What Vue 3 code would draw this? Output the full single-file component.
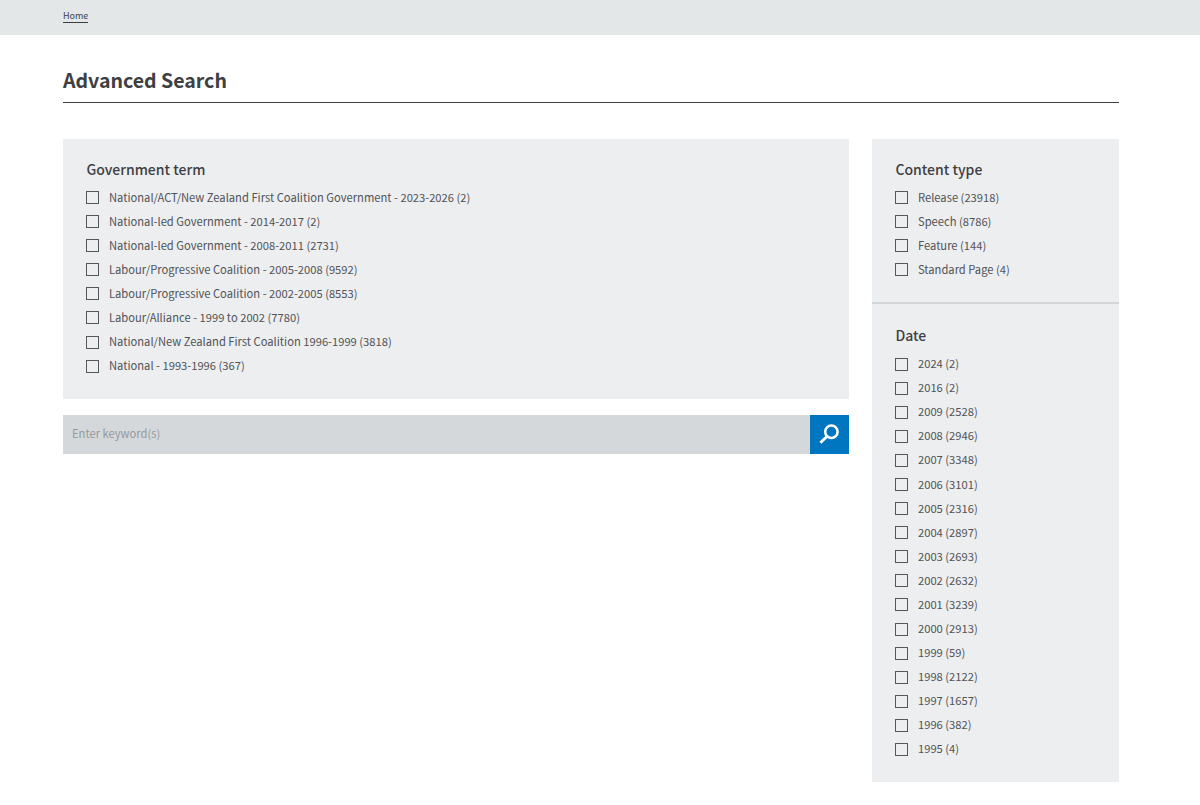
<script setup>
import { ref } from "vue"

const keyword = ref("")

const terms = ref([
  { label: "National/ACT/New Zealand First Coalition Government - 2023-2026", count: 2 },
  { label: "National-led Government - 2014-2017", count: 2 },
  { label: "National-led Government - 2008-2011", count: 2731 },
  { label: "Labour/Progressive Coalition - 2005-2008", count: 9592 },
  { label: "Labour/Progressive Coalition - 2002-2005", count: 8553 },
  { label: "Labour/Alliance - 1999 to 2002", count: 7780 },
  { label: "National/New Zealand First Coalition 1996-1999", count: 3818 },
  { label: "National - 1993-1996", count: 367 }
])

const sideFilters = ref([
  {
    title: "Content type",
    options: [
      { label: "Release", count: 23918 },
      { label: "Speech", count: 8786 },
      { label: "Feature", count: 144 },
      { label: "Standard Page", count: 4 }
    ]
  },
  {
    title: "Date",
    options: [
      { label: "2024", count: 2 },
      { label: "2016", count: 2 },
      { label: "2009", count: 2528 },
      { label: "2008", count: 2946 },
      { label: "2007", count: 3348 },
      { label: "2006", count: 3101 },
      { label: "2005", count: 2316 },
      { label: "2004", count: 2897 },
      { label: "2003", count: 2693 },
      { label: "2002", count: 2632 },
      { label: "2001", count: 3239 },
      { label: "2000", count: 2913 },
      { label: "1999", count: 59 },
      { label: "1998", count: 2122 },
      { label: "1997", count: 1657 },
      { label: "1996", count: 382 },
      { label: "1995", count: 4 }
    ]
  }
])
</script>

<template>
  <div class="page">
    <nav class="breadcrumb">
      <a href="#">Home</a>
    </nav>

    <main class="container">
      <h1>Advanced Search</h1>

      <div class="search-layout">
        <div class="search-main">
          <section class="panel">
            <h2>Government term</h2>
            <label v-for="term in terms" :key="term.label" class="option">
              <input type="checkbox" />
              <span>{{ term.label }} ({{ term.count }})</span>
            </label>
          </section>

          <form class="search-box" @submit.prevent>
            <input v-model="keyword" type="text" placeholder="Enter keyword(s)" />
            <button type="submit" aria-label="Search">
              <svg width="20" height="20" viewBox="0 0 20 20" fill="none" stroke="#fff">
                <circle cx="12.4" cy="7.8" r="6.2" stroke-width="2.5" />
                <path d="M8.2 12.2 L1.4 18.8" stroke-width="2.9" />
              </svg>
            </button>
          </form>
        </div>

        <aside class="sidebar">
          <section v-for="filter in sideFilters" :key="filter.title" class="panel">
            <h2>{{ filter.title }}</h2>
            <label v-for="option in filter.options" :key="option.label" class="option">
              <input type="checkbox" />
              <span>{{ option.label }} ({{ option.count }})</span>
            </label>
          </section>
        </aside>
      </div>
    </main>
  </div>
</template>

<style>
body {
  margin: 0;
  background: #fff;
}
</style>

<style scoped>
.page {
  height: 805px;
  overflow: hidden;
  font-family: "Noto Sans CJK SC", "Noto Sans", sans-serif;
  color: #3d4042;
}

.breadcrumb {
  box-sizing: border-box;
  height: 35px;
  padding: 9px 63px 0;
  background: #e3e7e8;
  font-size: 9px;
  line-height: 13px;
}

.breadcrumb a {
  display: inline-block;
  color: #3d4042;
  text-decoration: none;
  border-bottom: 1px solid #3d4042;
}

.container {
  width: 1056px;
  margin-left: 63px;
}

h1 {
  box-sizing: border-box;
  height: 68px;
  margin: 0 0 36px;
  padding-top: 30px;
  border-bottom: 1px solid #3d4042;
  font-size: 19.55px;
  line-height: 30px;
  font-weight: 700;
}

.search-layout {
  display: grid;
  grid-template-columns: 785.5px 247px;
  justify-content: space-between;
  align-items: start;
}

.panel {
  box-sizing: border-box;
  padding: 19px 23.4px 21.3px;
  background: #edeef0;
}

.sidebar .panel {
  padding-bottom: 20.8px;
}

.sidebar .panel + .panel {
  padding-top: 19.5px;
  border-top: 2px solid #d3d6d8;
}

.sidebar .panel + .panel h2 {
  margin-bottom: 5px;
}

h2 {
  margin: 0 0 4px;
  font-size: 14px;
  line-height: 23px;
  font-weight: 500;
}

.option {
  display: flex;
  align-items: center;
  gap: 9.6px;
  height: 24.08px;
  font-size: 11.2px;
  color: #505356;
}

.option input {
  appearance: none;
  width: 13px;
  height: 13px;
  margin: 1px 0 0;
  border: 1px solid #55585a;
}

.option span {
  margin-top: -1px;
}

.search-box {
  display: flex;
  height: 39px;
  margin-top: 16px;
}

.search-box input {
  flex: 1;
  min-width: 0;
  padding: 0 9px 2px;
  border: none;
  outline: none;
  background: #d4d8db;
  font-family: inherit;
  font-size: 11.2px;
}

.search-box input::placeholder {
  color: #969a9c;
}

.search-box button {
  display: flex;
  align-items: center;
  justify-content: center;
  width: 39px;
  padding: 0;
  border: none;
  background: #0076c0;
  cursor: pointer;
}
</style>
